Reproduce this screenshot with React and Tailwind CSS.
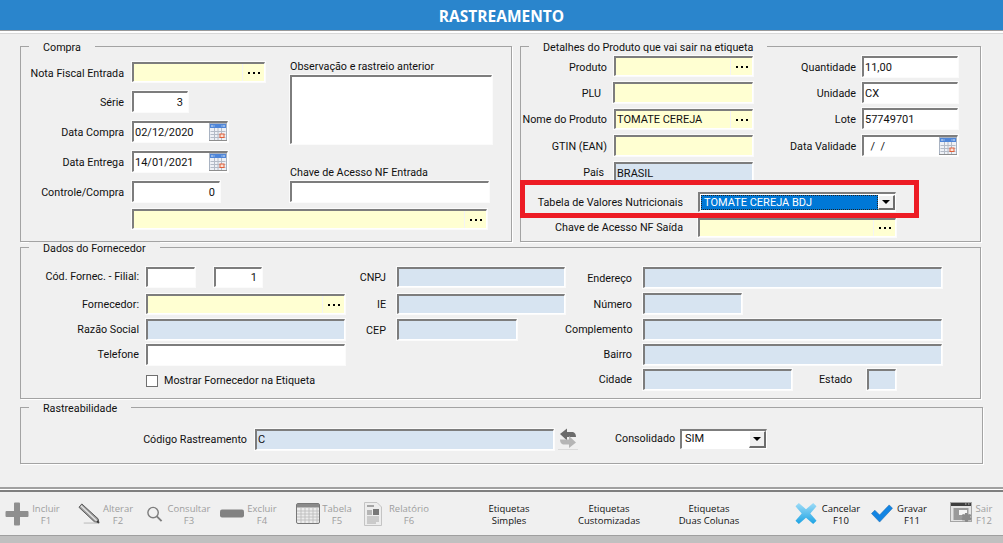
import React from "react";

const Dots = () => (
  <div className="w-[22px] h-full border-l border-l-[#f4f4f4] flex items-center justify-center gap-[3px] shrink-0">
    <span className="w-[2px] h-[2px] bg-black" />
    <span className="w-[2px] h-[2px] bg-black" />
    <span className="w-[2px] h-[2px] bg-black" />
  </div>
);

const Cal = () => (
  <svg width="18" height="18" viewBox="0 0 18 18" className="shrink-0">
    <rect x="0.500" y="0.500" width="17" height="17" fill="#eef1f6" stroke="#a9b3c2" />
    <rect x="1" y="1" width="16" height="4" fill="#4f86d8" />
    <path d="M3 2v2M5 2.500v1M13 2.500v1M15 2v2" stroke="#dfe9f8" />
    <path d="M1.500 8.500h15M1.500 11.500h15M1.500 14.500h15M5.500 5v12M9 5v12M12.500 5v12" stroke="#b4bbc7" />
    <rect x="11" y="11" width="4" height="3.500" fill="#fbe3d8" stroke="#e0603a" />
    <path d="M0 17.500h18" stroke="#8d8d8d" />
  </svg>
);

const Box = ({ className = "", children, end, right }) => (
  <div className={"flex items-center shrink-0 text-[11px] border-t-2 border-l-2 border-t-[#7d7d7d] border-l-[#7d7d7d] border-r border-b border-r-white border-b-white outline outline-1 outline-[#fbfbfb] " + className}>
    <div className={"flex-1 min-w-0 truncate px-[1px] leading-none " + (right ? "text-right pr-[4px]" : "")}>{children}</div>
    {end}
  </div>
);

const Row = ({ label, labelW, gap, className = "", children, down = "mt-[2px]" }) => (
  <div className={"flex items-center " + className}>
    <div className={"text-right shrink-0 leading-[14px] whitespace-nowrap " + labelW + " " + gap + " " + down}>{label}</div>
    {children}
  </div>
);

const Group = ({ title, className = "", children }) => (
  <section className={"relative border border-[#a3a3a3] shadow-[1px_1px_0_#ffffff] shrink-0 " + className}>
    <div className="absolute top-[-6px] left-[8px] h-[13px] px-[14px] bg-[#f0f0f0] leading-[13px] whitespace-nowrap">{title}</div>
    {children}
  </section>
);

const yellow = "bg-[#ffffd2]";
const blue = "bg-[#d7e4f1]";
const white = "bg-white";

const Tool = ({ icon, iconW, textW, ml, l1, l2, off }) => (
  <div className={"flex items-center h-full shrink-0 " + ml}>
    {icon && <div className={"flex justify-center shrink-0 " + iconW}>{icon}</div>}
    <div className={"text-center leading-[12px] whitespace-nowrap shrink-0 mt-[2px] " + textW + " " + (off ? "text-[#9e9e9e]" : "text-[#111]")}>
      <div>{l1}</div>
      <div>{l2}</div>
    </div>
  </div>
);

const IPlus = () => (
  <svg width="24" height="24" viewBox="0 0 24 24"><path d="M9 1.500q0-1 1-1h4q1 0 1 1V9h7.500q1 0 1 1v4q0 1-1 1H15v7.500q0 1-1 1h-4q-1 0-1-1V15H1.500q-1 0-1-1v-4q0-1 1-1H9z" fill="#8f8f8f" /></svg>
);
const IPencil = () => (
  <svg width="23" height="23" viewBox="0 0 23 23">
    <path d="M1 5 4 1.500 21 17l1 4.500-4.500-1z" fill="#9a9a9a" stroke="#555" strokeWidth="1" />
    <path d="M3 3.500 19.500 19" stroke="#e4e4e4" strokeWidth="1.500" />
    <path d="M6 21.500h14" stroke="#c9c9c9" strokeWidth="1.500" />
    <path d="M19 20.500l3 1-1-3z" fill="#333" />
  </svg>
);
const ISearch = () => (
  <svg width="18" height="18" viewBox="0 0 18 18" fill="none" stroke="#7d7d7d"><circle cx="7.500" cy="7.500" r="5.500" strokeWidth="1.500" /><path d="M11.500 11.500 16.500 16.500" strokeWidth="2" /></svg>
);
const IMinus = () => (
  <svg width="24" height="9" viewBox="0 0 24 9"><rect x="0" y="0.500" width="24" height="8" rx="2" fill="#828282" /></svg>
);
const ITable = () => (
  <svg width="24" height="21" viewBox="0 0 24 21">
    <rect x="0.500" y="0.500" width="23" height="20" rx="1.500" fill="#ececec" stroke="#777" />
    <rect x="1" y="1" width="22" height="3.500" fill="#8a8a8a" />
    <path d="M1 8h22M1 11h22M1 14h22M1 17h22M5 5v15M9 5v15M13 5v15M17 5v15M21 5v15" stroke="#b9b9b9" strokeWidth="0.800" />
  </svg>
);
const IReport = () => (
  <svg width="18" height="24" viewBox="0 0 18 24">
    <path d="M0.500 0.500H13L17.500 5V23.500H0.500z" fill="#ededed" stroke="#c4c4c4" />
    <rect x="3" y="3" width="7" height="2" fill="#a5a5a5" />
    <rect x="3" y="8" width="5" height="5" fill="#b5b5b5" />
    <rect x="9" y="7" width="6" height="6" fill="#777" />
    <path d="M3 15h12M3 17h12M3 19h12M3 21h9" stroke="#a8a8a8" />
  </svg>
);
const ICancel = () => (
  <svg width="23" height="23" viewBox="0 0 23 23">
    <defs><linearGradient id="cx" x1="0" y1="0" x2="0" y2="1"><stop offset="0" stopColor="#9fdcf7" /><stop offset="1" stopColor="#1ba3e4" /></linearGradient></defs>
    <path d="M4 .500 11.500 7 19 .500l3.500 3.500-6.500 7.500 6.500 7.500-3.500 3.500-7.500-6.500L4 22.500.500 19 7 11.500.500 4z" fill="url(#cx)" />
  </svg>
);
const ICheck = () => (
  <svg width="23" height="19" viewBox="0 0 23 19">
    <path d="M0.500 9.500 4 6l5 5L19 .500 22.500 4 9 18.500z" fill="#1385e3" stroke="#0d5fa8" strokeWidth="0.500" />
  </svg>
);
const IExit = () => (
  <svg width="23" height="23" viewBox="0 0 23 23">
    <rect x="0.500" y="0.500" width="21" height="19" fill="#e4e4e4" stroke="#a5a5a5" />
    <rect x="1" y="1" width="20" height="3" fill="#3e3e3e" />
    <path d="M15 2h1.500M18 2h1.500" stroke="#bbb" />
    <rect x="3.500" y="6" width="15" height="12" fill="#9a9a9a" />
    <rect x="9" y="8" width="8" height="5" fill="#f4f4f4" />
    <path d="M17 11l1.200 1.500 2-.5 1 1.500-1 1.500 1.300 1.500-1 2-2-.2-1 1.700-2 0-1-1.700-2 .2-1-2 1.300-1.500-1-1.500 1-1.500 2 .5L15 11z" fill="#8a8a8a" />
  </svg>
);
const ISwap = () => (
  <svg width="20" height="22" viewBox="0 0 20 22" className="shrink-0">
    <path d="M2 6 9 0.500V4h6q3 1 3 5H9v3.500z" fill="#6b6b6b" />
    <path d="M18 14.500 11 20v-3.500H5q-3-1-3-5h9V8z" fill="#b5b5b5" />
    <path d="M0 21.500h20" stroke="#dadada" />
  </svg>
);

const Arrow = ({ className = "" }) => (
  <div className={"flex items-center justify-center shrink-0 bg-[#f0f0f0] border-t border-l border-t-white border-l-white border-r-2 border-b-2 border-r-[#6d6d6d] border-b-[#6d6d6d] " + className}>
    <span className="w-0 h-0 border-x-[4px] border-x-transparent border-t-[4px] border-t-black" />
  </div>
);

export default function App() {
  return (
    <div className="w-[1003px] h-[543px] flex flex-col overflow-hidden bg-[#f0f0f0] text-[10.750px] text-[#111] font-['Roboto',Arial,sans-serif]">
      <header className="h-[31px] shrink-0 bg-[#2a85cc] border-b border-b-[#9a9a9a] flex items-center justify-center text-white text-[15.500px] font-bold font-['Open_Sans',sans-serif] pt-[3px]">
        RASTREAMENTO
      </header>
      <div className="h-[2px] shrink-0 bg-white" />
      <main className="flex-1 min-h-0 pl-[20px] pt-[12px] border-t border-t-[#d8d8d8]">
        <div className="flex gap-[8px] h-[196px]">
          <Group title="Compra" className="w-[492px]">
            <div className="flex">
              <div className="w-[269px] shrink-0 pt-[15px]">
                <Row label="Nota Fiscal Entrada" labelW="w-[103px]" gap="mr-[8px]" down="mt-[4px]">
                  <Box className={"w-[133px] h-[20px] " + yellow} end={<Dots />} />
                </Row>
                <Row label="Série" labelW="w-[103px]" gap="mr-[8px]" className="mt-[9px]">
                  <Box right className={"w-[56px] h-[21px] " + white}>3</Box>
                </Row>
                <Row label="Data Compra" labelW="w-[103px]" gap="mr-[8px]" className="mt-[9px]">
                  <Box className={"w-[96px] h-[21px] " + white} end={<Cal />}>02/12/2020</Box>
                </Row>
                <Row label="Data Entrega" labelW="w-[103px]" gap="mr-[8px]" className="mt-[9px]">
                  <Box className={"w-[96px] h-[21px] " + white} end={<Cal />}>14/01/2021</Box>
                </Row>
                <Row label="Controle/Compra" labelW="w-[103px]" gap="mr-[8px]" className="mt-[9px]">
                  <Box right className={"w-[88px] h-[21px] " + white}>0</Box>
                </Row>
              </div>
              <div className="pt-[13px]">
                <div className="leading-[14px] mb-[1px]">Observação e rastreio anterior</div>
                <Box className={"w-[202px] h-[69px] " + white} />
                <div className="leading-[14px] mt-[22px] mb-[1px]">Chave de Acesso NF Entrada</div>
                <Box className={"w-[199px] h-[21px] " + white} />
              </div>
            </div>
            <div className="pl-[111px] mt-[7px]">
              <Box className={"w-[355px] h-[20px] " + yellow} end={<Dots />} />
            </div>
          </Group>

          <Group title="Detalhes do Produto que vai sair na etiqueta" className="w-[461px]">
            <div className="absolute left-[-1px] top-[133px] w-[399px] h-[38px] border-[5px] border-[#ed1c24]" />
            <div className="flex pt-[9px]">
              <div className="w-[269px] shrink-0">
                <Row label="Produto" labelW="w-[86px]" gap="mr-[7px]" down="mt-[3px]">
                  <Box className={"w-[139px] h-[20px] " + yellow} end={<Dots />} />
                </Row>
                <Row label="PLU" labelW="w-[80px]" gap="mr-[12px]" className="mt-[6px]">
                  <Box className={"w-[140px] h-[21px] " + yellow} />
                </Row>
                <Row label="Nome do Produto" labelW="w-[86px]" gap="mr-[7px]" className="mt-[6px]">
                  <Box className={"w-[139px] h-[20px] " + yellow} end={<Dots />}>TOMATE CEREJA</Box>
                </Row>
                <Row label="GTIN (EAN)" labelW="w-[86px]" gap="mr-[7px]" className="mt-[6px]">
                  <Box className={"w-[139px] h-[21px] " + yellow} />
                </Row>
                <Row label="País" labelW="w-[83px]" gap="mr-[10px]" className="mt-[6px]" down="mt-0">
                  <Box className={"w-[139px] h-[21px] " + blue}>BRASIL</Box>
                </Row>
              </div>
              <div>
                <Row label="Quantidade" labelW="w-[66px]" gap="mr-[6px]">
                  <Box className={"w-[96px] h-[21px] " + white}>11,00</Box>
                </Row>
                <Row label="Unidade" labelW="w-[66px]" gap="mr-[6px]" className="mt-[5px]">
                  <Box className={"w-[96px] h-[21px] " + white}>CX</Box>
                </Row>
                <Row label="Lote" labelW="w-[66px]" gap="mr-[6px]" className="mt-[5px]">
                  <Box className={"w-[96px] h-[21px] " + white}>57749701</Box>
                </Row>
                <Row label="Data Validade" labelW="w-[66px]" gap="mr-[6px]" className="mt-[6px]">
                  <Box className={"w-[96px] h-[21px] " + white} end={<Cal />}>&nbsp;&nbsp;/ &nbsp;/</Box>
                </Row>
              </div>
            </div>
            <Row label="Tabela de Valores Nutricionais" labelW="w-[162px]" gap="mr-[15px]" className="mt-[9px]">
              <div className="w-[198px] h-[20px] py-[1px] pl-[1px] flex border-t-2 border-l-2 border-t-[#7d7d7d] border-l-[#7d7d7d] border-r border-b border-r-white border-b-white bg-white shrink-0">
                <div className="flex-1 bg-[#0078d7] text-white text-[11px] leading-[15px] pl-[3px] outline-1 outline-dotted outline-[#222] -outline-offset-1">TOMATE CEREJA BDJ</div>
                <Arrow className="w-[17px] h-full" />
              </div>
            </Row>
            <Row label="Chave de Acesso NF Saída" labelW="w-[162px]" gap="mr-[15px]" className="mt-[6px]" down="mt-[1px]">
              <Box className={"w-[198px] h-[19px] " + yellow} end={<Dots />} />
            </Row>
          </Group>
        </div>

        <Group title="Dados do Fornecedor" className="w-[961px] h-[152px] mt-[5px]">
          <div className="flex pt-[19px]">
            <div className="w-[324px] shrink-0">
              <Row label="Cód. Fornec. - Filial:" labelW="w-[118px]" gap="mr-[7px]" down="mt-0">
                <Box className={"w-[49px] h-[20px] " + white} />
                <Box right className={"w-[48px] h-[20px] ml-[19px] " + white}>1</Box>
              </Row>
              <Row label="Fornecedor:" labelW="w-[118px]" gap="mr-[7px]" className="mt-[7px]">
                <Box className={"w-[199px] h-[20px] " + yellow} end={<Dots />} />
              </Row>
              <Row label="Razão Social" labelW="w-[118px]" gap="mr-[7px]" className="mt-[5px]" down="mt-0">
                <Box className={"w-[199px] h-[21px] " + blue} />
              </Row>
              <Row label="Telefone" labelW="w-[118px]" gap="mr-[7px]" className="mt-[4px]" down="mt-0">
                <Box className={"w-[199px] h-[21px] " + white} />
              </Row>
              <div className="flex items-center pl-[125px] mt-[9px]">
                <span className="w-[12px] h-[12px] bg-white border border-[#6f6f6f] mr-[6px]" />
                <span className="leading-[14px]">Mostrar Fornecedor na Etiqueta</span>
              </div>
            </div>
            <div className="w-[220px] shrink-0">
              <Row label="CNPJ" labelW="w-[41px]" gap="mr-[11px]">
                <Box className={"w-[168px] h-[20px] " + blue} />
              </Row>
              <Row label="IE" labelW="w-[41px]" gap="mr-[11px]" className="mt-[7px]">
                <Box className={"w-[168px] h-[20px] " + blue} />
              </Row>
              <Row label="CEP" labelW="w-[41px]" gap="mr-[11px]" className="mt-[5px]">
                <Box className={"w-[120px] h-[21px] " + blue} />
              </Row>
            </div>
            <div>
              <Row label="Endereço" labelW="w-[67px]" gap="mr-[11px]">
                <Box className={"w-[299px] h-[21px] " + blue} />
              </Row>
              <Row label="Número" labelW="w-[67px]" gap="mr-[11px]" className="mt-[5px]">
                <Box className={"w-[99px] h-[21px] " + blue} />
              </Row>
              <Row label="Complemento" labelW="w-[67px]" gap="mr-[11px]" className="mt-[5px]" down="mt-0">
                <Box className={"w-[299px] h-[21px] " + blue} />
              </Row>
              <Row label="Bairro" labelW="w-[67px]" gap="mr-[11px]" className="mt-[4px]" down="mt-0">
                <Box className={"w-[299px] h-[21px] " + blue} />
              </Row>
              <Row label="Cidade" labelW="w-[67px]" gap="mr-[11px]" className="mt-[4px]" down="mt-0">
                <Box className={"w-[149px] h-[21px] " + blue} />
                <span className="ml-[27px] w-[33px] mr-[15px] leading-[14px] whitespace-nowrap">Estado</span>
                <Box className={"w-[29px] h-[21px] " + blue} />
              </Row>
            </div>
          </div>
        </Group>

        <Group title="Rastreabilidade" className="w-[963px] h-[57px] mt-[8px]">
          <Row label="Código Rastreamento" labelW="w-[226px]" gap="mr-[8px]" className="pt-[20px]">
            <Box className={"w-[299px] h-[21px] " + blue}>C</Box>
            <div className="ml-[4px]"><ISwap /></div>
            <span className="ml-[37px] w-[59px] mr-[6px] leading-[14px] whitespace-nowrap">Consolidado</span>
            <div className="w-[87px] h-[20px] flex text-[11px] border-t-2 border-l-2 border-t-[#7d7d7d] border-l-[#7d7d7d] border-r border-b border-r-white border-b-white bg-white shrink-0">
              <div className="flex-1 pl-[3px] leading-[16px]">SIM</div>
              <Arrow className="w-[17px] h-full" />
            </div>
          </Row>
        </Group>
      </main>
      <div className="h-[2px] shrink-0 bg-[#a0a0a0]" />
      <div className="h-[1px] shrink-0 bg-white" />
      <footer className="h-[46px] shrink-0 border-t-2 border-t-[#7f7f7f] border-b border-b-[#9f9f9f] bg-[#f0f0f0] flex items-center pl-[5px] text-[9.500px] font-['Open_Sans',sans-serif]">
        <Tool off ml="" iconW="w-[24px]" textW="w-[34px]" icon={<IPlus />} l1="Incluir" l2="F1" />
        <Tool off ml="ml-[15px]" iconW="w-[22px]" textW="w-[36px]" icon={<IPencil />} l1="Alterar" l2="F2" />
        <Tool off ml="ml-[10px]" iconW="w-[17px]" textW="w-[52px]" icon={<ISearch />} l1="Consultar" l2="F3" />
        <Tool off ml="ml-[5px]" iconW="w-[24px]" textW="w-[36px]" icon={<IMinus />} l1="Excluir" l2="F4" />
        <Tool off ml="ml-[16px]" iconW="w-[24px]" textW="w-[34px]" icon={<ITable />} l1="Tabela" l2="F5" />
        <Tool off ml="ml-[10px]" iconW="w-[18px]" textW="w-[54px]" icon={<IReport />} l1="Relatório" l2="F6" />
        <Tool ml="ml-[34px]" textW="w-[78px]" l1="Etiquetas" l2="Simples" />
        <Tool ml="ml-[22px]" textW="w-[78px]" l1="Etiquetas" l2="Customizadas" />
        <Tool ml="ml-[22px]" textW="w-[78px]" l1="Etiquetas" l2="Duas Colunas" />
        <Tool ml="ml-[47px]" iconW="w-[22px]" textW="w-[48px]" icon={<ICancel />} l1="Cancelar" l2="F10" />
        <Tool ml="ml-[6px]" iconW="w-[22px]" textW="w-[38px]" icon={<ICheck />} l1="Gravar" l2="F11" />
        <Tool off ml="ml-[19px]" iconW="w-[23px]" textW="w-[22px]" icon={<IExit />} l1="Sair" l2="F12" />
      </footer>
      <div className="h-[7px] shrink-0 bg-[#c0c0c0]" />
    </div>
  );
}
